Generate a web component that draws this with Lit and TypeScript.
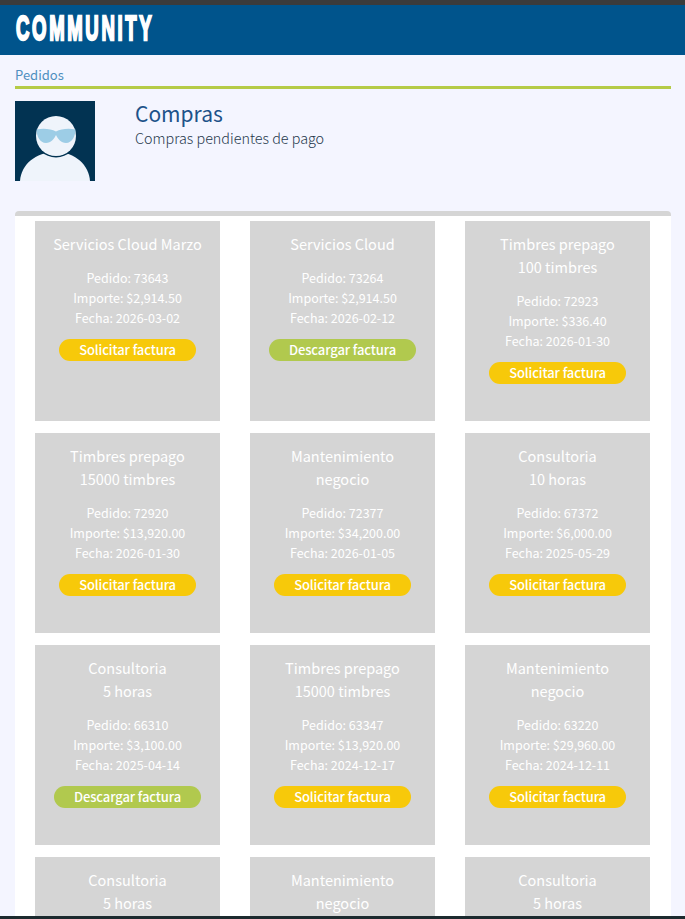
import { LitElement, html, css } from "lit";
import { customElement } from "lit/decorators.js";

type Order = { title: string[]; pedido: string; importe: string; fecha: string; done?: boolean };

const orders: Order[] = [
  { title: ["Servicios Cloud Marzo"], pedido: "73643", importe: "$2,914.50", fecha: "2026-03-02" },
  { title: ["Servicios Cloud"], pedido: "73264", importe: "$2,914.50", fecha: "2026-02-12", done: true },
  { title: ["Timbres prepago", "100 timbres"], pedido: "72923", importe: "$336.40", fecha: "2026-01-30" },
  { title: ["Timbres prepago", "15000 timbres"], pedido: "72920", importe: "$13,920.00", fecha: "2026-01-30" },
  { title: ["Mantenimiento", "negocio"], pedido: "72377", importe: "$34,200.00", fecha: "2026-01-05" },
  { title: ["Consultoria", "10 horas"], pedido: "67372", importe: "$6,000.00", fecha: "2025-05-29" },
  { title: ["Consultoria", "5 horas"], pedido: "66310", importe: "$3,100.00", fecha: "2025-04-14", done: true },
  { title: ["Timbres prepago", "15000 timbres"], pedido: "63347", importe: "$13,920.00", fecha: "2024-12-17" },
  { title: ["Mantenimiento", "negocio"], pedido: "63220", importe: "$29,960.00", fecha: "2024-12-11" },
  { title: ["Consultoria", "5 horas"], pedido: "", importe: "", fecha: "" },
  { title: ["Mantenimiento", "negocio"], pedido: "", importe: "", fecha: "" },
  { title: ["Consultoria", "5 horas"], pedido: "", importe: "", fecha: "" },
];

@customElement("app-root")
export class AppRoot extends LitElement {
  static styles = css`
    :host {
      display: flex;
      flex-direction: column;
      height: 919px;
      overflow: hidden;
      background: #f4f5ff;
      font-family: "Noto Sans CJK SC", "Noto Sans", sans-serif;
      color: #1f2d3d;
    }
    .topstrip { height: 5px; background: #3b3b3b; flex: none; }
    .brand {
      height: 50px;
      flex: none;
      background: #00548c;
      display: flex;
      align-items: center;
      padding: 0 0 4px 16px;
      box-sizing: border-box;
      overflow: hidden;
    }
    .logo {
      font-family: "Liberation Sans", sans-serif;
      font-weight: 700;
      font-size: 35px;
      line-height: 46px;
      color: #fff;
      -webkit-text-stroke: 2.4px #fff;
      transform: scaleX(0.53);
      transform-origin: left center;
      letter-spacing: 5px;
    }
    .main { flex: 1; min-height: 0; overflow: hidden; padding: 0 14px 0 15px; }
    .crumb {
      font-size: 13px;
      line-height: 20px;
      color: #4f8fc0;
      padding-top: 10px;
      box-sizing: border-box;
      border-bottom: 3px solid #b5cb47;
      height: 34px;
    }
    .head { display: flex; padding-top: 11px; height: 122px; box-sizing: border-box; }
    .avatar { width: 80px; height: 80px; flex: none; display: block; margin-top: 1px; }
    .info { margin-left: 40px; }
    h1 { margin: 0; font-weight: 400; font-size: 21px; line-height: 26px; color: #1d5289; }
    .sub { font-size: 14.35px; line-height: 24px; font-weight: 300; color: #26384c; }
    .panel {
      background: #fff;
      border-top: 5px solid #d5d5d5;
      border-radius: 4px 4px 0 0;
      padding: 5px 0 0 20px;
      display: grid;
      grid-template-columns: repeat(3, 185px);
      column-gap: 30px;
      row-gap: 12px;
    }
    .card {
      height: 200px;
      background: #d5d5d5;
      color: #fff;
      text-align: center;
      padding-top: 10.5px;
      box-sizing: border-box;
      display: flex;
      flex-direction: column;
      align-items: center;
    }
    .title { font-size: 14.5px; line-height: 23px; margin-bottom: 13.5px; }
    .row { font-size: 12.5px; line-height: 20px; }
    .btn {
      margin-top: 11px;
      height: 22px;
      border-radius: 11px;
      padding: 0 20px;
      font-size: 13px;
      font-weight: 500;
      letter-spacing: -0.1px;
      line-height: 21px;
      background: #f7c90a;
      color: #fff;
    }
    .btn.done { background: #b1c94e; }
    .bottom { height: 3px; flex: none; background: #1c2a2e; }
  `;

  render() {
    return html`
      <div class="topstrip"></div>
      <div class="brand"><span class="logo">COMMUNITY</span></div>
      <div class="main">
        <div class="crumb">Pedidos</div>
        <div class="head">
          <svg class="avatar" viewBox="0 0 80 80">
            <rect width="80" height="80" fill="#023352" />
            <path d="M5 80C6 64 20 51 41 51C60 51 74 64 75 80Z" fill="#eff4fb" />
            <circle cx="41" cy="35" r="21.5" fill="#023352" />
            <circle cx="41" cy="35" r="20" fill="#eff4fb" />
            <path d="M21.5 28.5C29 27 36 28 41 30.5C46 28 53 27 60.5 28.5C60.5 35 57 42 51 42C46 42 43 38 41 34C39 38 36 42 31 42C25 42 21.5 35 21.5 28.5Z" fill="#9dcde6" />
          </svg>
          <div class="info">
            <h1>Compras</h1>
            <div class="sub">Compras pendientes de pago</div>
          </div>
        </div>
        <div class="panel">
          ${orders.map(
            (o) => html`
              <div class="card">
                <div class="title">${o.title.map((t) => html`<div>${t}</div>`)}</div>
                ${o.pedido
                  ? html`
                      <div class="row">Pedido: ${o.pedido}</div>
                      <div class="row">Importe: ${o.importe}</div>
                      <div class="row">Fecha: ${o.fecha}</div>
                      <div class="btn ${o.done ? "done" : ""}">${o.done ? "Descargar factura" : "Solicitar factura"}</div>
                    `
                  : ""}
              </div>
            `
          )}
        </div>
      </div>
      <div class="bottom"></div>
    `;
  }
}
